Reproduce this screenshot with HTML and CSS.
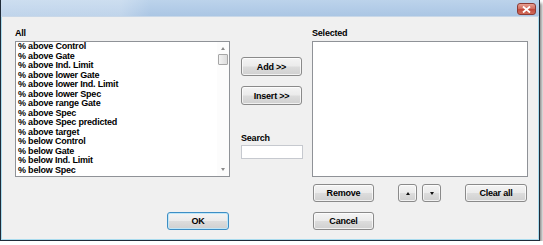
FILE: index.html
```html
<!DOCTYPE html>
<html lang="en">

<head>
  <meta charset="UTF-8">
  <title>Select columns</title>
  <link rel="stylesheet" href="styles.css">
</head>
<body>
  <div class="window">
    <!-- Title bar -->
    <div class="titlebar">
      <div class="glow"></div>
      <div class="close">
        <svg width="9" height="7" viewBox="0 0 9 7"><path d="M1 0.5 L8 6.5 M8 0.5 L1 6.5" stroke="#fff" stroke-width="1.8"/></svg>
      </div>
    </div>

    <div class="body">
      <div class="panes">
        <div class="pane-left">
          <div class="label">All</div>
          <div class="listbox">
            <div class="items">
              <div class="item">% above Control</div>
              <div class="item">% above Gate</div>
              <div class="item">% above Ind. Limit</div>
              <div class="item">% above lower Gate</div>
              <div class="item">% above lower Ind. Limit</div>
              <div class="item">% above lower Spec</div>
              <div class="item">% above range Gate</div>
              <div class="item">% above Spec</div>
              <div class="item">% above Spec predicted</div>
              <div class="item">% above target</div>
              <div class="item">% below Control</div>
              <div class="item">% below Gate</div>
              <div class="item">% below Ind. Limit</div>
              <div class="item">% below Spec</div>
            </div>
            <div class="scrollbar">
              <span class="arrow up"></span>
              <span class="thumb"></span>
              <span class="arrow down"></span>
            </div>
          </div>
        </div>

        <div class="pane-mid">
          <button class="btn btn-add">Add &gt;&gt;</button>
          <button class="btn btn-insert">Insert &gt;&gt;</button>
          <div class="label search-label">Search</div>
          <input type="text" class="search">
        </div>

        <div class="pane-right">
          <div class="label">Selected</div>
          <div class="listbox selected"></div>
          <div class="actions">
            <button class="btn btn-remove">Remove</button>
            <button class="btn btn-small btn-up"><span class="tri up"></span></button>
            <button class="btn btn-small btn-down"><span class="tri down"></span></button>
            <button class="btn btn-clear">Clear all</button>
          </div>
        </div>
      </div>

      <div class="footer">
        <button class="btn btn-ok">OK</button>
        <button class="btn btn-cancel">Cancel</button>
      </div>
    </div>
  </div>
</body>
</html>
```

FILE: styles.css
```css
body {
  margin: 0;
  padding: 0;
  background-color: #ffffff;
  font-family: "Liberation Sans", Arial, sans-serif;
  font-size: 9px;
  font-weight: bold;
  letter-spacing: -0.2px;
  color: #000;
}

.window {
  width: 538px;
  height: 240px;
  border: 1px solid #1f2b38;
  border-top: none;
  box-shadow: inset 0 0 0 1px #a9dbee, 2px 3px 3px rgba(0, 0, 0, 0.45);
  background-color: #f0f0f0;
  display: flex;
  flex-direction: column;
  overflow: hidden;
}

.titlebar {
  position: relative;
  height: 17px;
  flex: none;
  background: linear-gradient(to bottom, #bcd3eb, #abc6e4);
  border-bottom: 1px solid #c9d8e8;
  box-sizing: border-box;
  display: flex;
  justify-content: flex-end;
  align-items: flex-start;
}

.glow {
  position: absolute;
  left: 0;
  top: 0;
  width: 150px;
  height: 16px;
  background: linear-gradient(to right, rgba(255, 255, 255, 0.25) 80%, rgba(255, 255, 255, 0));
}

.close {
  width: 19px;
  height: 12px;
  margin-top: 3px;
  margin-right: 3px;
  border: 1px solid #8c3a34;
  border-radius: 3px;
  background: linear-gradient(to bottom, #e8a093, #d0695c 50%, #c2473a 51%, #d06a58);
  display: flex;
  justify-content: center;
  align-items: center;
  box-sizing: border-box;
}

.body {
  flex: 1;
  padding: 10px 0 0 14px;
}

.panes {
  display: flex;
  align-items: flex-start;
}

.label {
  height: 12px;
  line-height: 12px;
  margin-bottom: 2px;
}

.listbox {
  box-sizing: border-box;
  height: 136px;
  border: 1px solid #8f9297;
  background-color: #fff;
  display: flex;
}

.pane-left {
  width: 215px;
}

.items {
  flex: 1;
  padding-left: 2px;
}

.item {
  height: 9.5px;
  line-height: 9.5px;
  white-space: nowrap;
}

.scrollbar {
  width: 12px;
  display: flex;
  flex-direction: column;
  align-items: center;
  background-color: #fcfcfc;
}

.arrow {
  width: 0;
  height: 0;
  border-left: 2.5px solid transparent;
  border-right: 2.5px solid transparent;
}

.arrow.up {
  margin-top: 5px;
  border-bottom: 3px solid #8a8a8a;
}

.arrow.down {
  margin-top: auto;
  margin-bottom: 5px;
  border-top: 3px solid #8a8a8a;
}

.thumb {
  box-sizing: border-box;
  width: 10px;
  height: 11px;
  margin-top: 4px;
  border: 1px solid #a6a6a6;
  border-radius: 1px;
  background: linear-gradient(to right, #f2f2f2, #dcdcdc);
}

.pane-mid {
  width: 62px;
  margin-left: 11px;
  display: flex;
  flex-direction: column;
  align-items: flex-start;
}

.btn {
  box-sizing: border-box;
  font-family: inherit;
  font-size: 9px;
  font-weight: bold;
  letter-spacing: -0.2px;
  color: #000;
  padding: 0;
  border: 1px solid #8a8a8a;
  border-radius: 3px;
  background: linear-gradient(to bottom, #f4f4f4, #ebebeb 48%, #dcdcdc 52%, #d0d0d0);
  box-shadow: inset 0 0 0 1px rgba(255, 255, 255, 0.7);
}

.btn-add {
  width: 61px;
  height: 19px;
  margin-top: 30px;
}

.btn-insert {
  width: 61px;
  height: 19px;
  margin-top: 10px;
}

.search-label {
  margin-top: 27px;
  margin-bottom: 1px;
}

.search {
  box-sizing: border-box;
  width: 62px;
  height: 14px;
  margin: 0;
  border: 1px solid #c6c9cf;
  background-color: #fff;
}

.pane-right {
  width: 216px;
  margin-left: 9px;
}

.actions {
  display: flex;
  margin-top: 7px;
  padding-left: 1px;
}

.btn-remove,
.btn-clear {
  width: 61px;
  height: 18px;
}

.btn-small {
  width: 19px;
  height: 18px;
  display: flex;
  justify-content: center;
  align-items: center;
}

.btn-up {
  margin-left: 24px;
}

.btn-down {
  margin-left: 5px;
}

.btn-clear {
  margin-left: 24px;
  width: 62px;
}

.tri {
  width: 0;
  height: 0;
  border-left: 2.5px solid transparent;
  border-right: 2.5px solid transparent;
}

.tri.up {
  border-bottom: 3px solid #111;
}

.tri.down {
  border-top: 3px solid #111;
}

.footer {
  display: flex;
  margin-top: 10px;
}

.btn-ok {
  width: 62px;
  height: 18px;
  margin-left: 152px;
  border-color: #3d8ec4;
  box-shadow: inset 0 0 0 1px #bfe6f8;
}

.btn-cancel {
  width: 61px;
  height: 18px;
  margin-left: 84px;
}
```
